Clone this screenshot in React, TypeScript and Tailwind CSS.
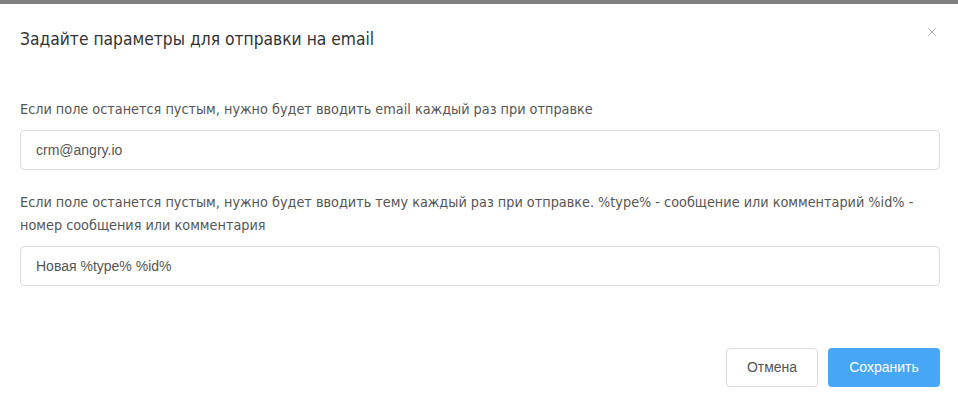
import {X} from 'lucide-react'

function Field({label, value}: {label: string; value: string}) {
  return (
    <div className="flex flex-col">
      <p className="text-[14.3px] leading-[23px] text-[#555]" style={{fontFamily: '"DejaVu Sans Condensed", "DejaVu Sans", sans-serif'}}>
        {label}
      </p>
      <input
        readOnly
        value={value}
        className="mt-[9px] h-[40px] rounded-[4px] border border-[#dcdcdc] px-[15px] text-[14px] text-[#555] outline-none font-['Liberation_Sans',Arial,sans-serif]"
      />
    </div>
  )
}

function App() {
  return (
    <div className="flex h-[405px] w-[958px] flex-col overflow-hidden bg-white">
      <div className="h-[4px] w-full bg-[#7f7f7f]" />
      <div className="flex items-start justify-between pl-[20px] pr-[19px] pt-[24px]">
        <h2 className="text-[17.3px] leading-[22px] text-[#333]" style={{fontFamily: '"DejaVu Sans Condensed", "DejaVu Sans", sans-serif'}}>
          Задайте параметры для отправки на email
        </h2>
        <button className="-mt-[3px] text-[#8c8c8c]">
          <X size={14} strokeWidth={1.3} />
        </button>
      </div>
      <div className="flex flex-col gap-[21px] pl-[20px] pr-[18px] pt-[48px]">
        <Field
          label="Если поле останется пустым, нужно будет вводить email каждый раз при отправке"
          value="crm@angry.io"
        />
        <Field
          label="Если поле останется пустым, нужно будет вводить тему каждый раз при отправке. %type% - сообщение или комментарий %id% - номер сообщения или комментария"
          value="Новая %type% %id%"
        />
      </div>
      <div className="flex justify-end gap-[10px] px-[18px] pt-[62px] font-['Liberation_Sans',Arial,sans-serif]">
        <button className="h-[39px] w-[92px] rounded-[4px] border border-[#dcdcdc] bg-white text-[14px] text-[#555]">
          Отмена
        </button>
        <button className="h-[39px] w-[112px] rounded-[4px] bg-[#48a6f6] text-[14px] text-white">
          Сохранить
        </button>
      </div>
    </div>
  )
}

export default App
